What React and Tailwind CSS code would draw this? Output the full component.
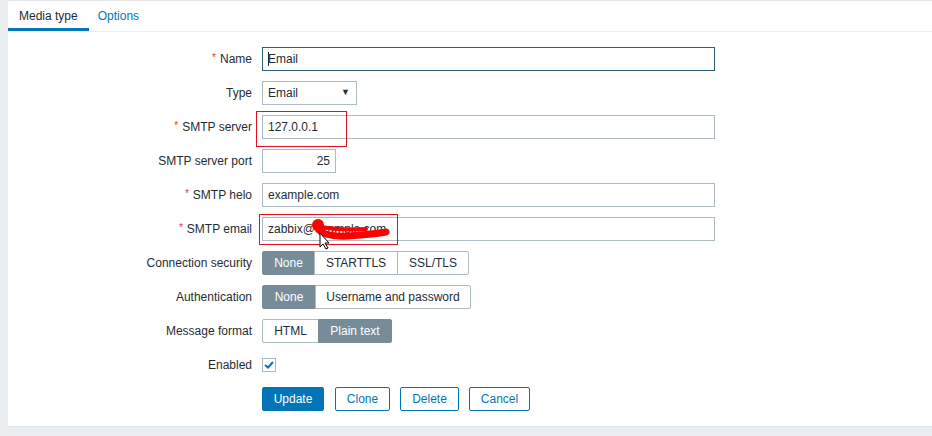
import React from 'react';

const LABEL_W = 'w-[254px]';

const Row = ({ label, required = false, children }) => (
  <div className="flex items-center h-[24px]">
    <label className={`${LABEL_W} shrink-0 text-right pr-[10px] whitespace-nowrap`}>
      {required && <span className="text-[#e33734] mr-[4px] text-[10px] align-top">*</span>}
      {label}
    </label>
    {children}
  </div>
);

const TextInput = ({ value, width = 'w-[453px]', focused = false, right = false }) => (
  <div
    className={`${width} h-[24px] border ${
      focused ? 'border-[#2a5f80]' : 'border-[#acbbc2]'
    } flex items-center px-[5px] ${right ? 'justify-end' : ''}`}
  >
    {focused && <span className="w-px h-[14px] bg-[#1f2c33] -mr-px" />}
    <span>{value}</span>
  </div>
);

const Segmented = ({ items }) => (
  <div className="flex h-[24px]">
    {items.map((it, i) => (
      <div
        key={it.label}
        className={`${it.w} h-full flex items-center justify-center border ${
          it.active ? 'bg-[#768d99] border-[#768d99] text-white' : 'border-[#acbbc2] text-[#1f2c33]'
        } ${i > 0 ? '-ml-px' : ''} ${i === 0 ? 'rounded-l-[2px]' : ''} ${
          i === items.length - 1 ? 'rounded-r-[2px]' : ''
        }`}
      >
        {it.label}
      </div>
    ))}
  </div>
);

export default function App() {
  return (
    <div className="relative w-[932px] h-[436px] overflow-hidden bg-[#ebeef1] pl-[8px] font-['Liberation_Sans',Arial,sans-serif] text-[12px] text-[#1f2c33]">
      <div className="bg-white border-t border-[#e3e6e8] border-b border-b-[#dde2e5]">
        {/* Tabs */}
        <div className="flex h-[31px] border-b border-[#ebeef1]">
          <div className="px-[11px] h-full flex items-center border-b-[3px] border-[#0275b8] pt-[3px] text-[#1f2c33]">
            Media type
          </div>
          <div className="px-[9px] h-full flex items-center text-[#0275b8]">Options</div>
        </div>

        {/* Form */}
        <div className="pt-[15px] pb-[15px] flex flex-col gap-[10px]">
          <Row label="Name" required>
            <TextInput value="Email" focused />
          </Row>
          <Row label="Type">
            <div className="w-[95px] h-[24px] border border-[#acbbc2] flex items-center justify-between pl-[5px] pr-[6px]">
              <span>Email</span>
              <span className="text-[9px]">▼</span>
            </div>
          </Row>
          <Row label="SMTP server" required>
            <TextInput value="127.0.0.1" />
          </Row>
          <Row label="SMTP server port">
            <TextInput value="25" width="w-[74px]" right />
          </Row>
          <Row label="SMTP helo" required>
            <TextInput value="example.com" />
          </Row>
          <Row label="SMTP email" required>
            <TextInput value="zabbix@example.com" />
          </Row>
          <Row label="Connection security">
            <Segmented
              items={[
                { label: 'None', w: 'w-[53px]', active: true },
                { label: 'STARTTLS', w: 'w-[84px]' },
                { label: 'SSL/TLS', w: 'w-[72px]' },
              ]}
            />
          </Row>
          <Row label="Authentication">
            <Segmented
              items={[
                { label: 'None', w: 'w-[54px]', active: true },
                { label: 'Username and password', w: 'w-[156px]' },
              ]}
            />
          </Row>
          <Row label="Message format">
            <Segmented
              items={[
                { label: 'HTML', w: 'w-[57px]' },
                { label: 'Plain text', w: 'w-[74px]', active: true },
              ]}
            />
          </Row>
          <Row label="Enabled">
            <div className="w-[14px] h-[14px] border border-[#acbbc2] flex items-center justify-center">
              <svg width="10" height="8" viewBox="0 0 10 8">
                <path d="M1 4 L4 6.5 L9 1" fill="none" stroke="#0275b8" strokeWidth="2" />
              </svg>
            </div>
          </Row>
          <div className="flex items-center h-[24px] pl-[254px]">
            <button className="w-[62px] h-[24px] bg-[#0275b8] border border-[#0275b8] text-white rounded-[2px]">
              Update
            </button>
            <button className="ml-[11px] w-[55px] h-[24px] border border-[#0275b8] text-[#0275b8] rounded-[2px]">
              Clone
            </button>
            <button className="ml-[10px] w-[59px] h-[24px] border border-[#0275b8] text-[#0275b8] rounded-[2px]">
              Delete
            </button>
            <button className="ml-[10px] w-[61px] h-[24px] border border-[#0275b8] text-[#0275b8] rounded-[2px]">
              Cancel
            </button>
          </div>
        </div>
      </div>

      {/* Annotation overlay */}
      <svg className="absolute left-0 top-0 pointer-events-none" width="932" height="436">
        <rect x="256.5" y="111.5" width="90" height="35" fill="none" stroke="#e0101e" strokeWidth="1" />
        <rect x="259.5" y="214.5" width="138" height="30" fill="none" stroke="#e0101e" strokeWidth="1" />
        <path d="M318 227 C 319 234, 332 237, 348 236 C 362 235, 376 234, 386 232" fill="none" stroke="#f00" strokeWidth="7" strokeLinecap="round" />
        <path d="M316 226 C 330 229, 350 230, 366 229" fill="none" stroke="#f00" strokeWidth="4" strokeLinecap="round" />
        <circle cx="318" cy="225" r="6" fill="#f00" />
        <path d="M320 233 L320 247 L323 244 L326 249 L328 248 L325 243 L329 243 Z" fill="#fff" stroke="#000" strokeWidth="1" strokeLinejoin="round" />
      </svg>
    </div>
  );
}
